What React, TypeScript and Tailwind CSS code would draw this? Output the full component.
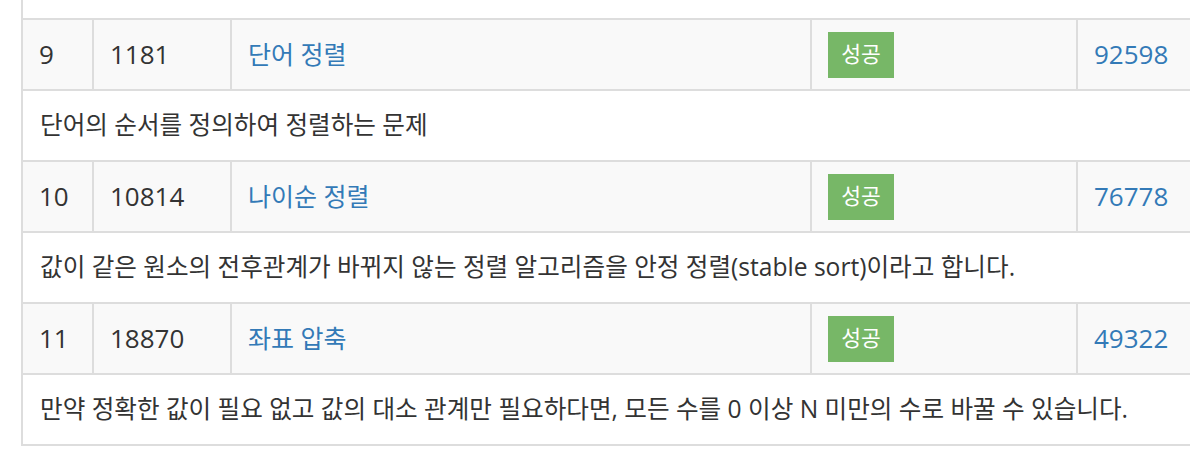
const rows = [
  {
    no: "9",
    id: "1181",
    title: "단어 정렬",
    count: "92598",
    desc: "단어의 순서를 정의하여 정렬하는 문제",
  },
  {
    no: "10",
    id: "10814",
    title: "나이순 정렬",
    count: "76778",
    desc: "값이 같은 원소의 전후관계가 바뀌지 않는 정렬 알고리즘을 안정 정렬(stable sort)이라고 합니다.",
  },
  {
    no: "11",
    id: "18870",
    title: "좌표 압축",
    count: "49322",
    desc: "만약 정확한 값이 필요 없고 값의 대소 관계만 필요하다면, 모든 수를 0 이상 N 미만의 수로 바꿀 수 있습니다.",
  },
];

export default function App() {
  return (
    <div className="w-[1190px] h-[454px] overflow-hidden bg-white text-[#333] font-['Open_Sans','Noto_Sans_CJK_KR',sans-serif]">
      <div className="ml-[21px] w-[1210px] border-l-2 border-b-2 border-[#dddddd]">
        <div className="h-[18px]" />
        {rows.map((r) => (
          <div key={r.id}>
            <div className="flex h-[71px] border-t-2 border-[#dddddd] bg-[#f9f9f9]">
              <div className="w-[69px] flex items-center pl-[16px] text-[26px]">{r.no}</div>
              <div className="w-[138px] flex items-center pl-[16px] border-l-2 border-[#dddddd] text-[26px]">
                {r.id}
              </div>
              <div className="w-[580px] flex items-center pl-[16px] border-l-2 border-[#dddddd] text-[25px] text-[#337ab7]">
                <a href="#">{r.title}</a>
              </div>
              <div className="w-[266px] flex items-center pl-[16px] border-l-2 border-[#dddddd]">
                <span className="w-[66px] h-[46px] flex items-center justify-center bg-[#77b767] text-white text-[21.5px]">
                  성공
                </span>
              </div>
              <div className="flex-1 flex items-center pl-[16px] border-l-2 border-[#dddddd] text-[26px] text-[#337ab7]">
                <a href="#">{r.count}</a>
              </div>
            </div>
            <div className="flex items-center h-[71px] border-t-2 border-[#dddddd] pl-[17px] text-[24.6px]">
              <p>{r.desc}</p>
            </div>
          </div>
        ))}
      </div>
    </div>
  );
}
